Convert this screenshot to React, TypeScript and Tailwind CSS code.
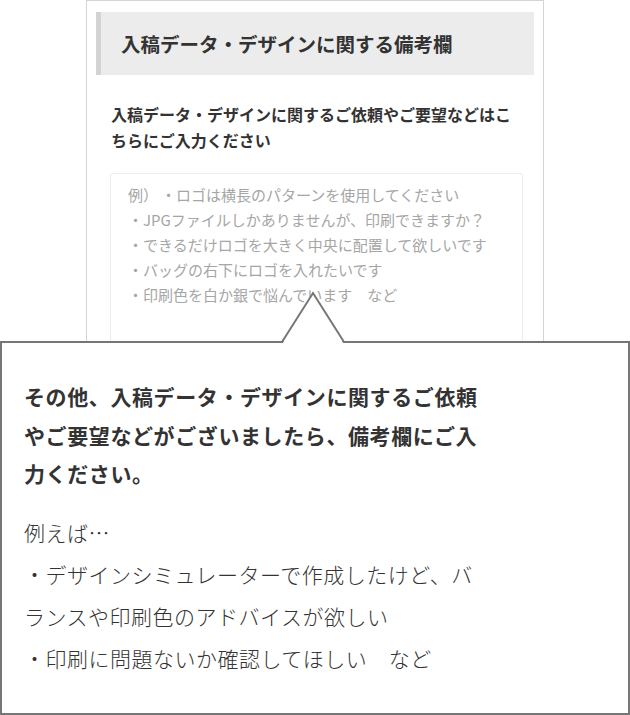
export default function App() {
  return (
    <div className="w-[630px] h-[715px] overflow-hidden bg-white font-['Noto_Sans_CJK_JP','Noto_Sans',sans-serif]">
      {/* screenshot of the form */}
      <div className="h-[341px] overflow-hidden pl-[86px]">
        <div className="w-[458px] h-[420px] border border-[#d4d4d4] bg-white pt-[11px] px-[9px]">
          <div className="h-[63px] flex items-center bg-[#ececec] border-l-[5px] border-[#d3d3d3] pl-[20px] text-[19.5px] font-bold text-[#333]">
            入稿データ・デザインに関する備考欄
          </div>
          <div className="pl-[15px] pt-[26px]">
            <p className="w-[412px] text-[16px] leading-[26px] font-bold text-[#333]">
              入稿データ・デザインに関するご依頼やご要望などはこちらにご入力ください
            </p>
            <div className="mt-[20px] ml-[-1px] w-[413px] h-[220px] border border-[#ececec] rounded-[3px] pl-[17px] pt-[8px] text-[15px] leading-[25px] text-[#a6a6a6]">
              <p>例）{'\u2009'}・ロゴは横長のパターンを使用してください</p>
              <p>・JPGファイルしかありませんが、印刷できますか？</p>
              <p>・できるだけロゴを大きく中央に配置して欲しいです</p>
              <p>・バッグの右下にロゴを入れたいです</p>
              <p>・印刷色を白か銀で悩んでいます　など</p>
            </div>
          </div>
        </div>
      </div>

      {/* speech bubble */}
      <div className="relative h-[374px] border-2 border-[#767676] bg-white pt-[34px] pl-[22px]">
        <svg className="absolute left-[278px] top-[-52px]" width="66" height="56" viewBox="0 0 66 56">
          <polygon points="1,55 33,2 65,55" fill="#ffffff" />
          <polyline points="2,51 33,2 64,51" fill="none" stroke="#767676" strokeWidth="2" strokeLinejoin="miter" />
        </svg>
        <p className="w-[465px] text-[21px] tracking-[0.6px] leading-[38.5px] font-bold text-[#333]">
          その他、入稿データ・デザインに関するご依頼やご要望などがございましたら、備考欄にご入力ください。
        </p>
        <div className="mt-[18px] w-[465px] text-[21px] tracking-[0.5px] leading-[42px] font-light text-[#333]">
          <p>例えば…</p>
          <p>・デザインシミュレーターで作成したけど、バランスや印刷色のアドバイスが欲しい</p>
          <p>・印刷に問題ないか確認してほしい　など</p>
        </div>
      </div>
    </div>
  );
}
